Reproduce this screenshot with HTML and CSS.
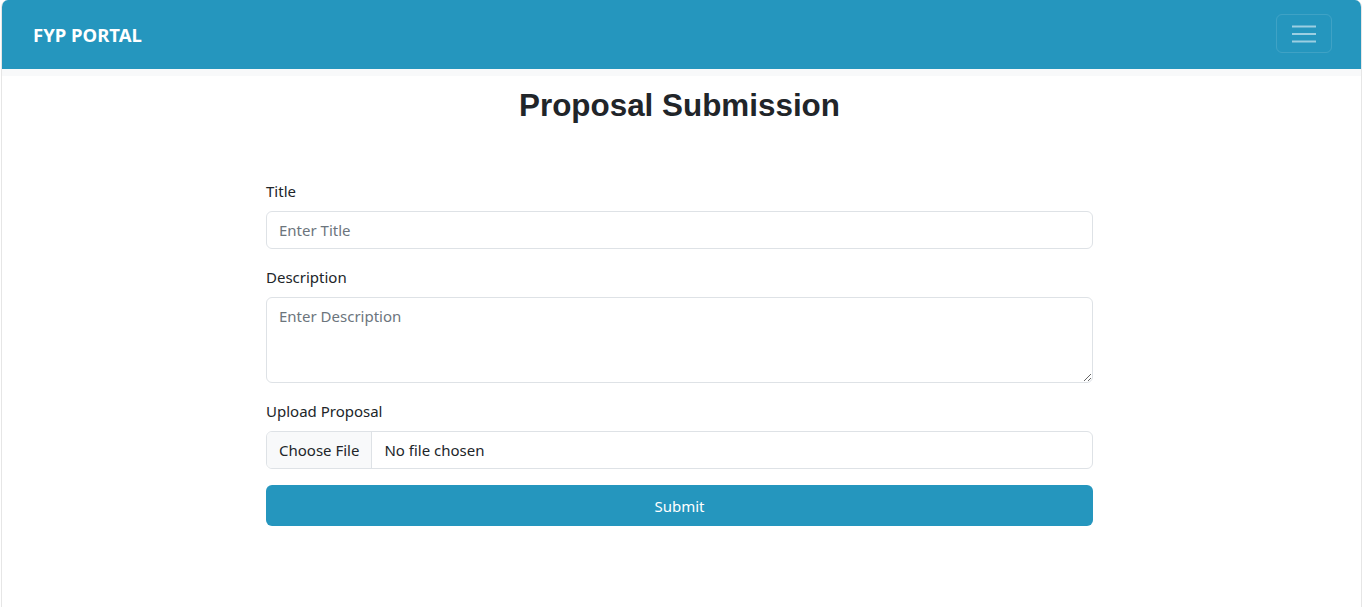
FILE: index.html
```html
<!DOCTYPE html>
<html>
<head>
<meta charset="utf-8">
<title>FYP Portal</title>
<link rel="stylesheet" href="styles.css">
</head>
<body>
<div class="frame">
  <nav class="navbar">
    <span class="brand">FYP PORTAL</span>
    <button class="toggler" aria-label="Toggle navigation">
      <svg width="24" height="18" viewBox="0 0 24 18"><path d="M0 1.5h24M0 9h24M0 16.5h24" stroke="rgba(255,255,255,0.55)" stroke-width="2"/></svg>
    </button>
  </nav>
  <div class="strip"></div>
  <main class="content">
    <h1 class="page-title">Proposal Submission</h1>
    <form class="proposal-form">
      <div class="field">
        <label class="label">Title</label>
        <input class="control" type="text" placeholder="Enter Title">
      </div>
      <div class="field">
        <label class="label">Description</label>
        <textarea class="control textarea" placeholder="Enter Description"></textarea>
      </div>
      <div class="field">
        <label class="label">Upload Proposal</label>
        <div class="file-control">
          <span class="file-btn">Choose File</span>
          <span class="file-name">No file chosen</span>
        </div>
      </div>
      <button type="button" class="submit">Submit</button>
    </form>
  </main>
</div>
</body>
</html>
```
FILE: styles.css
```css
html, body { margin: 0; padding: 0; background: #fff; }
body { font-family: "Noto Sans", "Open Sans", sans-serif; color: #212529; }
.frame {
  margin: 0 1px;
  height: 607px;
  border-left: 1px solid #e6e6e6;
  border-right: 1px solid #e6e6e6;
  border-radius: 7px 7px 0 0;
  overflow: hidden;
  box-sizing: border-box;
}
.navbar {
  height: 69px;
  background: #2596be;
  display: flex;
  align-items: center;
  justify-content: space-between;
  padding: 0 29px 0 31px;
}
.brand {
  color: #fff;
  font-weight: 700;
  font-size: 18.5px;
  letter-spacing: 0;
}
.toggler {
  width: 56px;
  height: 39px;
  margin-top: -2px;
  border: 1px solid rgba(255,255,255,0.12);
  border-radius: 6px;
  background: transparent;
  display: flex;
  align-items: center;
  justify-content: center;
  padding: 0;
}
.strip { height: 7px; background: #f8f9fa; }
.content { padding: 8px 0 0 264px; }
.page-title {
  width: 827px;
  margin: 0;
  text-align: center;
  font-family: "Liberation Sans", Arial, sans-serif;
  font-weight: 700;
  font-size: 31.4px;
  line-height: 44px;
  color: #212529;
}
.proposal-form { width: 827px; margin-top: 51px; }
.field { display: flex; flex-direction: column; margin-bottom: 16px; }
.label { font-size: 15px; line-height: 24px; margin-bottom: 8px; }
.control {
  box-sizing: border-box;
  height: 38px;
  border: 1px solid #dee2e6;
  border-radius: 6px;
  padding: 6px 12px;
  font-family: inherit;
  font-size: 15px;
  color: #212529;
  background: #fff;
}
.control::placeholder { color: #6c757d; }
.textarea { height: 86px; resize: vertical; padding-top: 8px; }
.file-control {
  display: flex;
  height: 38px;
  box-sizing: border-box;
  border: 1px solid #dee2e6;
  border-radius: 6px;
  overflow: hidden;
  font-size: 15px;
}
.file-btn {
  display: flex; align-items: center;
  padding: 0 12px;
  background: #f8f9fa;
  border-right: 1px solid #dee2e6;
}
.file-name { display: flex; align-items: center; padding: 0 12px; }
.submit {
  display: block;
  width: 100%;
  height: 41px;
  border: none;
  border-radius: 6px;
  background: #2596be;
  color: #fff;
  font-family: inherit;
  font-size: 15px;
}
```
